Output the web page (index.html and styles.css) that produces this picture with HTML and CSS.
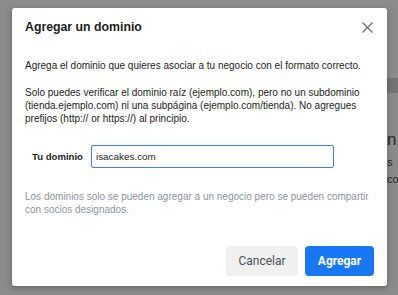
FILE: index.html
```html
<!DOCTYPE html>
<html lang="es">
<head>
    <meta charset="UTF-8">
    <meta name="viewport" content="width=device-width, initial-scale=1.0">
    <title>Agregar un dominio</title>
    <link rel="stylesheet" href="styles.css">
</head>
<body>
    <div class="backdrop">
        <div class="bg-band"></div>
        <div class="bg-text">
            <span class="bg-big">n</span>
            <span>s</span>
            <span>co</span>
        </div>
    </div>

    <div class="dialog">
        <div class="dialog-header">
            <h2>Agregar un dominio</h2>
            <button class="close" aria-label="Cerrar">
                <svg width="11" height="11" viewBox="0 0 11 11">
                    <path d="M0.5 0.5 L10.5 10.5 M10.5 0.5 L0.5 10.5" stroke="#6b6f76" stroke-width="1.3" fill="none"/>
                </svg>
            </button>
        </div>
        <div class="dialog-body">
            <p>Agrega el dominio que quieres asociar a tu negocio con el formato correcto.</p>
            <p>Solo puedes verificar el dominio raíz (ejemplo.com), pero no un subdominio (tienda.ejemplo.com) ni una subpágina (ejemplo.com/tienda). No agregues prefijos (http:// or https://) al principio.</p>
            <div class="field">
                <label for="dominio">Tu dominio</label>
                <input type="text" id="dominio" value="isacakes.com">
            </div>
            <p class="note">Los dominios solo se pueden agregar a un negocio pero se pueden compartir con socios designados.</p>
        </div>
        <div class="dialog-footer">
            <button class="btn btn-cancel">Cancelar</button>
            <button class="btn btn-primary">Agregar</button>
        </div>
    </div>
</body>
</html>
```

FILE: styles.css
```css
* {
    box-sizing: border-box;
}

body {
    margin: 0;
    width: 398px;
    height: 295px;
    overflow: hidden;
    background-color: #8b8b8b;
    font-family: "Liberation Sans", Arial, sans-serif;
    position: relative;
}

.backdrop {
    position: absolute;
    inset: 0;
}

.bg-band {
    position: absolute;
    left: 380px;
    top: 78px;
    width: 20px;
    height: 15px;
    background-color: #747474;
}

.bg-text {
    position: absolute;
    left: 387px;
    top: 130px;
    display: flex;
    flex-direction: column;
    color: #262626;
    font-size: 11px;
    line-height: 17px;
}

.bg-big {
    font-size: 17px;
    line-height: 20px;
    margin-bottom: 4px;
}

.dialog {
    position: absolute;
    left: 12px;
    top: 8px;
    width: 375px;
    height: 278px;
    background-color: #fff;
    border-radius: 3px;
    box-shadow: 0 2px 6px rgba(0, 0, 0, 0.25);
    display: flex;
    flex-direction: column;
}

.dialog-header {
    display: flex;
    align-items: center;
    justify-content: space-between;
    padding: 11px 14px 0 13px;
}

.dialog-header h2 {
    margin: 0;
    font-size: 12.3px;
    line-height: 16px;
    font-weight: bold;
    color: #1c1e21;
}

.close {
    border: none;
    background: none;
    padding: 0;
    width: 11px;
    height: 11px;
    display: flex;
    cursor: pointer;
}

.dialog-body {
    padding: 24px 13px 0 13px;
    flex: 1;
}

.dialog-body p {
    margin: 0 0 14px 0;
    font-size: 10px;
    line-height: 13px;
    color: #1c1e21;
}

.field {
    display: flex;
    align-items: center;
    gap: 8px;
    padding-left: 7px;
    margin: 20px 0 22px 0;
}

.field label {
    font-size: 9.6px;
    font-weight: bold;
    color: #1c1e21;
}

.field input {
    width: 243px;
    height: 23px;
    border: 1px solid #4080ff;
    border-radius: 2px;
    padding: 0 4px;
    font-family: "Liberation Sans", Arial, sans-serif;
    font-size: 9.9px;
    color: #1c1e21;
    outline: none;
}

.dialog-body p.note {
    color: #8d949e;
    margin: 0;
}

.dialog-footer {
    display: flex;
    justify-content: flex-end;
    gap: 7px;
    padding: 0 13px 10px 0;
}

.btn {
    height: 30px;
    border: none;
    border-radius: 4px;
    font-family: Roboto, "Liberation Sans", sans-serif;
    font-size: 12px;
    cursor: pointer;
}

.btn-cancel {
    width: 72px;
    background-color: #f0f0f0;
    color: #4b4f56;
}

.btn-primary {
    width: 69px;
    background-color: #1877f2;
    color: #fff;
    font-weight: bold;
}
```
